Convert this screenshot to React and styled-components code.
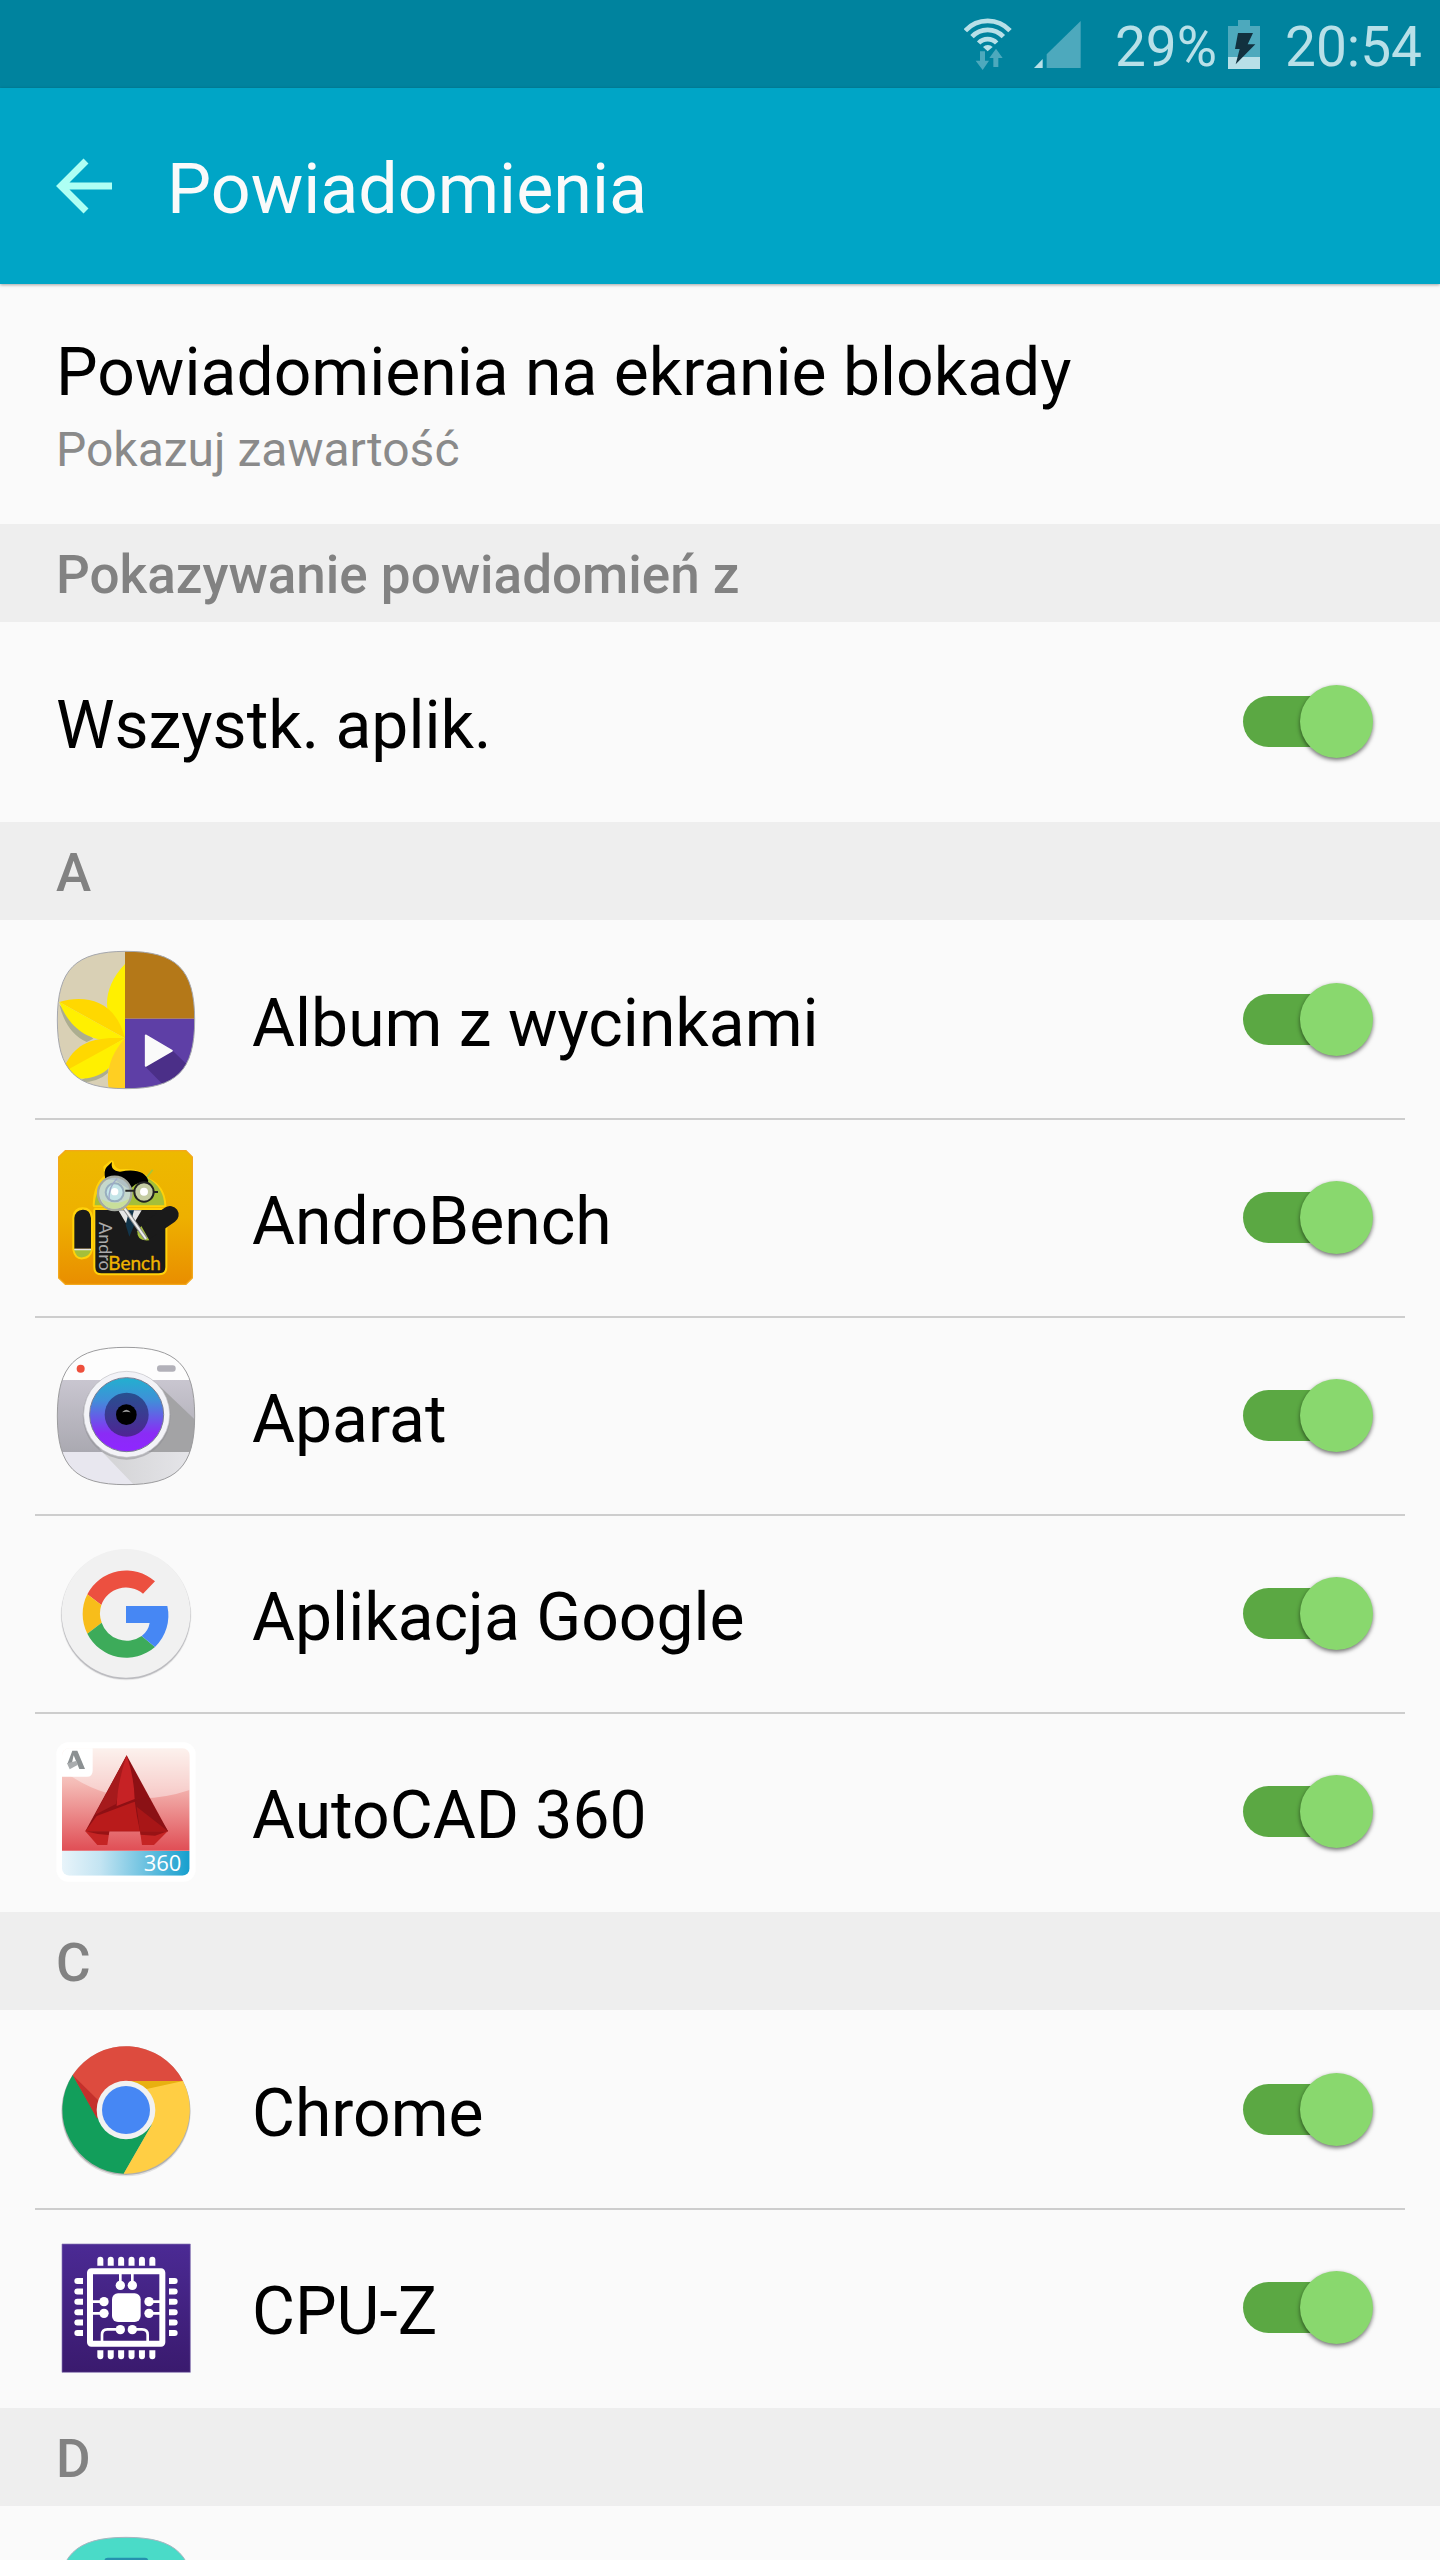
import styled, { createGlobalStyle } from 'styled-components';

const GlobalStyle = createGlobalStyle`
  body {
    margin: 0;
    background-color: #fafafa;
  }
`;
const Screen = styled.div`
  height: 100vh;
  overflow: hidden;
  background-color: #fafafa;
  color: #000;
  font-family: Roboto, sans-serif;
  font-size: 66px;
  line-height: 80px;
`;
const StatusBar = styled.div`
  display: flex;
  align-items: center;
  justify-content: flex-end;
  gap: 22px;
  height: 88px;
  padding-right: 18px;
  background-color: #00839e;
  color: #b8e0e8;
  font-size: 55px;
  svg {
    flex: none;
    display: block;
  }
`;
const Battery = styled.div`
  display: flex;
  align-items: center;
  gap: 11px;
  padding: 0 3px 0 12px;
`;
const StatusText = styled.span`
  padding-top: 6px;
`;
const Header = styled.header`
  position: relative;
  display: flex;
  align-items: center;
  gap: 55px;
  height: 196px;
  padding: 0 56px;
  background-color: #00a5c6;
  box-shadow: 0 1px 3px rgba(0, 0, 0, 0.35);
`;
const BackButton = styled.button`
  padding: 0;
  border: none;
  background: none;
  cursor: pointer;
  > svg {
    display: block;
  }
`;
const PageTitle = styled.h1`
  margin: 0;
  padding-top: 6px;
  color: #fafafa;
  font-size: 70px;
  font-weight: 400;
`;
const LockScreenItem = styled.button`
  display: block;
  width: 100%;
  height: 240px;
  padding: 12px 56px 0;
  border: none;
  background: none;
  color: inherit;
  font: inherit;
  text-align: left;
  cursor: pointer;
  > span {
    display: block;
  }
`;
const Summary = styled.span`
  color: #8a8a8a;
  font-size: 48px;
  line-height: 74px;
`;
const SectionTitle = styled.h2`
  height: 98px;
  margin: 0;
  padding: 4px 56px 0;
  box-sizing: border-box;
  background-color: #eee;
  color: #828282;
  font-size: 53px;
  font-weight: 500;
  line-height: 94px;
`;
const List = styled.ul`
  margin: 0;
  padding: 2px 35px;
  list-style: none;
`;
const Item = styled.li`
  & + & {
    border-top: 2px solid #cdcdcd;
  }
`;
const Row = styled.label`
  display: flex;
  align-items: center;
  gap: 56px;
  height: 196px;
  padding: 0 32px 0 21px;
  cursor: pointer;
  > svg {
    flex: none;
  }
`;
const RowText = styled.span`
  flex: 1;
  padding-top: 7px;
`;
const Switch = styled.input`
  appearance: none;
  display: grid;
  align-items: center;
  width: 130px;
  height: 74px;
  margin: 0 0 2px;
  cursor: pointer;
  &::before,
  &::after {
    content: '';
    grid-area: 1 / 1;
  }
  /* track */
  &::before {
    width: 110px;
    height: 51px;
    border-radius: 26px;
    background-color: #b4b4b4;
  }
  /* thumb */
  &::after {
    justify-self: start;
    width: 73px;
    height: 73px;
    border-radius: 50%;
    background-color: #ececec;
    box-shadow: 0 2px 4px rgba(0, 0, 0, 0.55);
  }
  &:checked::before {
    background-color: #5ba843;
  }
  &:checked::after {
    justify-self: end;
    background-color: #89d86e;
  }
`;

const WifiIcon = () => (
  <svg width="48" height="52" viewBox="72 50 144 156" aria-hidden="true">
    <g fill="none" stroke="#b8e0e8" strokeWidth="14">
      <path d="M76 88A91 91 0 0 1 210 88" />
      <path d="M96 106A64 64 0 0 1 190 106" />
      <path d="M116 125A37 37 0 0 1 170 125" />
    </g>
    <path fill="#4da9bd" d="M120 150h15v28h12l-19 28-21-28h13zM160 197v-27h-12l20-28 20 28h-13v27z" />
    <path fill="#b8e0e8" d="M129 137A20 20 0 0 1 158 137L143 150Z" />
  </svg>
);
const SignalIcon = () => (
  <svg width="47" height="47" viewBox="283 60 141 141" aria-hidden="true">
    <path fill="#b8e0e8" d="M283 201L309 174V201Z" />
    <path fill="#4da9bd" d="M321 201V160L423 60V201Z" />
  </svg>
);
const BatteryIcon = () => (
  <svg width="32" height="49" viewBox="864 54 96 147" aria-hidden="true">
    <path fill="#4da9bd" d="M894 54h36v18h30v93h-96V72h30z" />
    <path fill="#b8e0e8" d="M864 165h96v36h-96z" />
    <path fill="#12313f" d="M894 93h45l-16 34h23l-59 60 12-46h-14z" />
  </svg>
);
const BackIcon = () => (
  <svg width="56" height="56" viewBox="0 0 56 56" fill="none" stroke="#aefff4" strokeWidth="7">
    <path d="M56 28H5M30 3L5 28L30 53" />
  </svg>
);

const AlbumIcon = () => (
  <svg width="140" height="140" viewBox="48 60 420 420" aria-hidden="true">
    <clipPath id="album">
      <path d="M258 64C410 64 464 118 464 270S410 476 258 476 52 422 52 270 106 64 258 64Z" />
    </clipPath>
    <g clipPath="url(#album)">
      <path fill="#d9d0b5" d="M48 60h208v420H48z" />
      <path fill="#b47818" d="M255 60h213v206H255z" />
      <path fill="#5e3fa6" d="M255 266h213v214H255z" />
      <path fill="#acad90" d="M58 224Q80 310 140 336L160 326ZM110 456Q170 460 205 428V412Z" />
      <path fill="#fff000" d="M255 102C190 170 190 240 222 290L255 325Z" />
      <path fill="#ffd800" d="M58 216C130 195 225 205 255 325Z" />
      <path fill="#fff000" d="M58 216C85 290 150 350 255 325Z" />
      <path fill="#ffd800" d="M255 325C160 318 105 340 74 408L60 440Z" />
      <path fill="#fff000" d="M255 325C225 420 180 450 105 446L72 425Z" />
      <path fill="#ffcf22" d="M255 325C215 370 195 420 207 480H255Z" />
      <path fill="#4b2f88" d="M316 410L398 362L468 430V480H385Z" />
      <path fill="#fafafa" stroke="#fafafa" strokeWidth="5" strokeLinejoin="round" d="M317 316V408L396 362Z" />
    </g>
    <path fill="none" stroke="#a5a7ad" strokeWidth="3" d="M258 64C410 64 464 118 464 270S410 476 258 476 52 422 52 270 106 64 258 64Z" />
  </svg>
);
const AndroBenchIcon = () => (
  <svg width="140" height="140" viewBox="48 54 420 420" aria-hidden="true">
    <defs>
      <linearGradient id="bench" x2="0" y2="1">
        <stop stopColor="#edb900" />
        <stop offset=".5" stopColor="#eeb000" />
        <stop offset="1" stopColor="#e98e00" />
      </linearGradient>
    </defs>
    <path fill="url(#bench)" stroke="#f3a81c" strokeWidth="4" d="M76 62H438L457 81V444L438 463H76L56 444V81Z" />
    <g fill="none" stroke="#ffd20a" strokeWidth="12" strokeLinejoin="round">
      <path d="M166 240H376V412Q376 430 356 430H184Q166 430 166 412ZM103 262Q106 238 128 238T153 262V358Q148 380 128 382T103 358Z" />
      <path d="M164 226Q166 160 200 140L196 112 215 97Q218 120 240 124 300 118 324 150 370 170 373 226Z" />
    </g>
    <path stroke="#a4c639" strokeWidth="5" d="M318 145L338 119" />
    <path fill="#a4bf3a" d="M164 226C168 100 368 100 373 226Z" />
    <path fill="#000" d="M196 148Q190 122 200 111L216 96Q210 122 240 125Q312 112 325 152L322 162Q290 150 270 180L225 150Z" />
    <path fill="#a4bf3a" d="M103 360H153Q148 380 128 382T103 360Z" />
    <path fill="#1a1a1a" d="M103 264Q106 240 128 239T153 264V356H103ZM166 240H376V412Q376 430 356 430H184Q166 430 166 412Z" />
    <path fill="#e5e5e5" d="M103 356h50v5h-50zM235 241H305L270 300Z" />
    <path fill="#123449" d="M258 241H282L278 256 283 284 268 320 257 284 264 256Z" />
    <path stroke="#1a1a1a" strokeWidth="52" strokeLinecap="round" d="M390 254L320 302" />
    <path fill="#a4bf3a" d="M292 304Q290 335 328 331L304 288Z" />
    <path stroke="#8b8b8b" strokeWidth="12" d="M254 236L318 327" />
    <path stroke="#efefef" strokeWidth="6" d="M254 236L318 327" />
    <circle cx="224" cy="190" r="50" fill="#c9dce0" fillOpacity=".88" stroke="#a4a9a0" strokeWidth="7" />
    <circle cx="224" cy="187" r="27" fill="#c4e5e8" stroke="#98aebe" strokeWidth="6" />
    <path fill="#c9df9a" d="M184 208Q224 230 268 206Q255 234 224 236T184 208Z" />
    <path fill="none" stroke="#9da9c8" strokeWidth="4" d="M207 211Q205 170 232 145" />
    <circle cx="224" cy="185" r="11" fill="#fff" />
    <circle cx="312" cy="186" r="29" fill="#c4cca2" stroke="#222" strokeWidth="6" />
    <path stroke="#222" strokeWidth="6" d="M256 182H284M340 186H354" />
    <circle cx="312" cy="185" r="12" fill="#fff" />
    <g fontFamily="Lato, sans-serif">
      <text transform="translate(177 276) rotate(90)" fill="#a9a9a9" fontSize="54">Andro</text>
      <text x="205" y="419" fill="#f0b400" stroke="#f0b400" strokeWidth="1" fontSize="57">Bench</text>
    </g>
  </svg>
);
const CameraIcon = () => (
  <svg width="140" height="140" viewBox="48 48 420 420" aria-hidden="true">
    <defs>
      <clipPath id="camera">
        <path d="M258 52C410 52 464 106 464 258S410 464 258 464 52 410 52 258 106 52 258 52Z" />
      </clipPath>
      <linearGradient id="cameraBand" x2="0" y2="1">
        <stop stopColor="#c9c6d0" />
        <stop offset="1" stopColor="#aaa9b1" />
      </linearGradient>
      <linearGradient id="cameraShade">
        <stop stopColor="#d2d2d4" />
        <stop offset="1" stopColor="#e6e6ea" />
      </linearGradient>
      <linearGradient id="cameraLens" x2="0" y2="1">
        <stop stopColor="#22b0cf" />
        <stop offset=".3" stopColor="#3f90d8" />
        <stop offset=".75" stopColor="#8a2cf5" />
        <stop offset="1" stopColor="#8f26ff" />
      </linearGradient>
      <linearGradient id="cameraIris" x2="0" y2="1">
        <stop stopColor="#27508f" />
        <stop offset="1" stopColor="#4f2494" />
      </linearGradient>
    </defs>
    <g clipPath="url(#camera)">
      <path fill="#fdfdfd" d="M48 48h420v102H48z" />
      <path fill="url(#cameraBand)" d="M48 150h420v216H48z" />
      <path fill="#e8e7ef" d="M48 366h420v102H48z" />
      <path fill="#a3a3a5" d="M350 160L468 272V366H300Z" />
      <path fill="url(#cameraShade)" d="M176 355L285 468H468V366H300Z" />
    </g>
    <circle cx="122" cy="116" r="12" fill="#ee4f3c" />
    <rect x="351" y="106" width="56" height="19" rx="9" fill="#b2b1b9" />
    <circle cx="260" cy="257" r="132" fill="#8f8f95" fillOpacity=".55" />
    <circle cx="260" cy="253" r="129" fill="#f3f3f7" stroke="#c5c5ca" strokeWidth="2" />
    <circle cx="260" cy="254" r="111" fill="url(#cameraLens)" stroke="#777b92" strokeWidth="3" />
    <circle cx="260" cy="254" r="66" fill="url(#cameraIris)" />
    <circle cx="259" cy="254" r="31" fill="#000" />
    <path fill="#999" d="M246 247Q259 232 272 247Q259 243 246 247Z" />
    <path fill="none" stroke="#9c9c9e" strokeWidth="3" d="M258 52C410 52 464 106 464 258S410 464 258 464 52 410 52 258 106 52 258 52Z" />
  </svg>
);
const GoogleIcon = () => (
  <svg width="140" height="140" viewBox="48 42 420 420" aria-hidden="true">
    <circle cx="258" cy="255" r="196" fill="#ddd" fillOpacity=".6" />
    <circle cx="258" cy="254" r="194" fill="#bcbcc0" />
    <circle cx="258" cy="250" r="193" fill="#f1f1f1" />
    <path fill="#ec5040" d="M345 154A131 131 0 0 0 142 193L184 225A79 79 0 0 1 309 191Z" />
    <path fill="#f8bd1a" d="M142 193A131 131 0 0 0 142 311L185 278A79 79 0 0 1 184 225Z" />
    <path fill="#3dab5a" d="M142 311A131 131 0 0 0 345 351L305 318A79 79 0 0 1 185 278Z" />
    <path fill="#4687f4" d="M258 228H382A131 131 0 0 1 345 351L305 318Q325 303 329 279H258Z" />
  </svg>
);
const AutoCadIcon = () => (
  <svg width="140" height="140" viewBox="48 36 420 420" aria-hidden="true">
    <defs>
      <linearGradient id="cadSky" x2="0" y2="1">
        <stop stopColor="#fbe9e2" />
        <stop offset=".35" stopColor="#f4b9b4" />
        <stop offset="1" stopColor="#e04e55" />
      </linearGradient>
      <linearGradient id="cadBar">
        <stop stopColor="#e8f4fa" />
        <stop offset=".3" stopColor="#c3e4f2" />
        <stop offset="1" stopColor="#169fce" />
      </linearGradient>
      <clipPath id="cad">
        <rect x="66" y="55" width="383" height="382" rx="22" />
      </clipPath>
    </defs>
    <rect x="49" y="37" width="418" height="418" rx="36" fill="#fff" />
    <g clipPath="url(#cad)">
      <path fill="url(#cadSky)" d="M66 55h383v307H66z" />
      <path fill="#fff" fillOpacity=".4" d="M66 55H449V180Q240 250 66 120Z" />
      <path fill="url(#cadBar)" d="M66 363h383v74H66z" />
      <path fill="#fff" d="M50 36H158V122Q158 140 140 140H50Z" />
    </g>
    <path fill="#8e1014" d="M260 76L384 304H136Z" />
    <path fill="#a61a1c" d="M260 76L228 222 165 254Z" />
    <path fill="#c62225" d="M260 76Q232 160 230 228L284 207Q282 140 260 76Z" />
    <path fill="#b91b1b" d="M136 304L170 258 275 218 318 205 370 304Z" />
    <path fill="#8b1115" d="M284 212L320 200 384 304H300Q290 260 284 212Z" />
    <path fill="#a81617" d="M290 230L384 304H300Z" />
    <path fill="#c52424" d="M136 304H208L202 345H172ZM300 304H383L342 345H306Z" />
    <path fill="#981315" d="M136 304H208L206 315 174 312ZM300 304H383L345 317 302 314Z" />
    <path fill="#8b9092" d="M97 62H112L135 117H118L101 76 96 98 82 102Z" />
    <path fill="#aaadaf" d="M81 100L108 93 114 104 89 118Z" />
    <text x="311" y="423" fill="#fff" fontFamily="Open Sans, sans-serif" fontSize="66">360</text>
  </svg>
);
const ChromeIcon = () => (
  <svg width="140" height="140" viewBox="48 45 420 420" aria-hidden="true">
    <circle cx="258" cy="260" r="194" fill="#000" fillOpacity=".1" />
    <circle cx="258" cy="257" r="193" fill="#000" fillOpacity=".22" />
    <path fill="#129e5b" d="M98 150A192 192 0 0 0 251 446L335 300 258 200Z" />
    <path fill="#ffce44" d="M429 168A192 192 0 0 1 251 446L335 300 258 168Z" />
    <path fill="#dd4b3e" d="M98 150A192 192 0 0 1 429 168H258L172 280Z" />
    <path fill="#c4302b" d="M98 150L172 282 174 225Z" />
    <path fill="#e8b010" d="M270 168H429L320 192Z" />
    <circle cx="258" cy="255" r="88" fill="#f1f1f1" />
    <circle cx="258" cy="255" r="72" fill="#4687f4" />
  </svg>
);
const pins = [0, 1, 2, 3, 4, 5];
const CpuIcon = () => (
  <svg width="140" height="140" viewBox="48 39 420 420" aria-hidden="true">
    <defs>
      <linearGradient id="cpu" x2="0" y2="1">
        <stop stopColor="#4b2a94" />
        <stop offset="1" stopColor="#3a1a6e" />
      </linearGradient>
    </defs>
    <path fill="url(#cpu)" stroke="#8a78b5" strokeWidth="2" d="M66 57h385v385H66z" />
    <g fill="#fff">
      {pins.map((pin) => (
        <g key={pin}>
          <path d={`M${172 + pin * 31.2} 122v-18q0-9 9-9t9 9v18z`} />
          <path d={`M${172 + pin * 31.2} 376v18q0 9 9 9t9-9v-18z`} />
          <path d={`M129 ${159 + pin * 31.2}h-17q-9 0-9 9t9 9h17z`} />
          <path d={`M387 ${159 + pin * 31.2}h17q9 0 9 9t-9 9h-17z`} />
        </g>
      ))}
      <rect x="216" y="205" width="86" height="86" rx="18" />
      <circle cx="241" cy="181" r="14" />
      <circle cx="277" cy="181" r="14" />
      <circle cx="192" cy="230" r="14" />
      <circle cx="192" cy="265" r="14" />
      <circle cx="327" cy="230" r="14" />
      <circle cx="327" cy="265" r="14" />
      <circle cx="241" cy="314" r="14" />
      <circle cx="277" cy="314" r="14" />
    </g>
    <g fill="none" stroke="#fff">
      <rect x="150" y="139" width="217" height="217" rx="4" strokeWidth="18" />
      <path strokeWidth="8" d="M241 181V145M277 181V145M192 230H155M192 265H155M327 230H362M327 265H362M241 313H202Q186 313 186 329V350M277 313H306Q323 313 323 329V350" />
    </g>
  </svg>
);
const TealIcon = () => (
  <svg width="140" height="140" viewBox="168 438 420 420" aria-hidden="true">
    <path fill="#4adbc8" stroke="#a9b5c0" strokeWidth="3" d="M378 442C530 442 584 496 584 648S530 854 378 854 172 800 172 648 226 442 378 442Z" />
    <rect x="313" y="503" width="132" height="200" rx="10" fill="#2591ae" />
  </svg>
);

const sections = [
  {
    title: 'Pokazywanie powiadomień z',
    apps: [{ name: 'Wszystk. aplik.' }],
  },
  {
    title: 'A',
    apps: [
      { name: 'Album z wycinkami', icon: <AlbumIcon /> },
      { name: 'AndroBench', icon: <AndroBenchIcon /> },
      { name: 'Aparat', icon: <CameraIcon /> },
      { name: 'Aplikacja Google', icon: <GoogleIcon /> },
      { name: 'AutoCAD 360', icon: <AutoCadIcon /> },
    ],
  },
  {
    title: 'C',
    apps: [
      { name: 'Chrome', icon: <ChromeIcon /> },
      { name: 'CPU-Z', icon: <CpuIcon /> },
    ],
  },
];

export default function App() {
  return (
    <Screen>
      <GlobalStyle />
      <StatusBar>
        <WifiIcon />
        <SignalIcon />
        <Battery>
          <StatusText>29%</StatusText>
          <BatteryIcon />
        </Battery>
        <StatusText>20:54</StatusText>
      </StatusBar>
      <Header>
        <BackButton type="button" aria-label="Wstecz">
          <BackIcon />
        </BackButton>
        <PageTitle>Powiadomienia</PageTitle>
      </Header>
      <LockScreenItem type="button">
        <span>Powiadomienia na ekranie blokady</span>
        <Summary>Pokazuj zawartość</Summary>
      </LockScreenItem>
      {sections.map((section) => (
        <section key={section.title}>
          <SectionTitle>{section.title}</SectionTitle>
          <List>
            {section.apps.map((app) => (
              <Item key={app.name}>
                <Row>
                  {app.icon}
                  <RowText>{app.name}</RowText>
                  <Switch type="checkbox" defaultChecked />
                </Row>
              </Item>
            ))}
          </List>
        </section>
      ))}
      <SectionTitle>D</SectionTitle>
      <List>
        <Item>
          <Row as="div">
            <TealIcon />
          </Row>
        </Item>
      </List>
    </Screen>
  )
}
